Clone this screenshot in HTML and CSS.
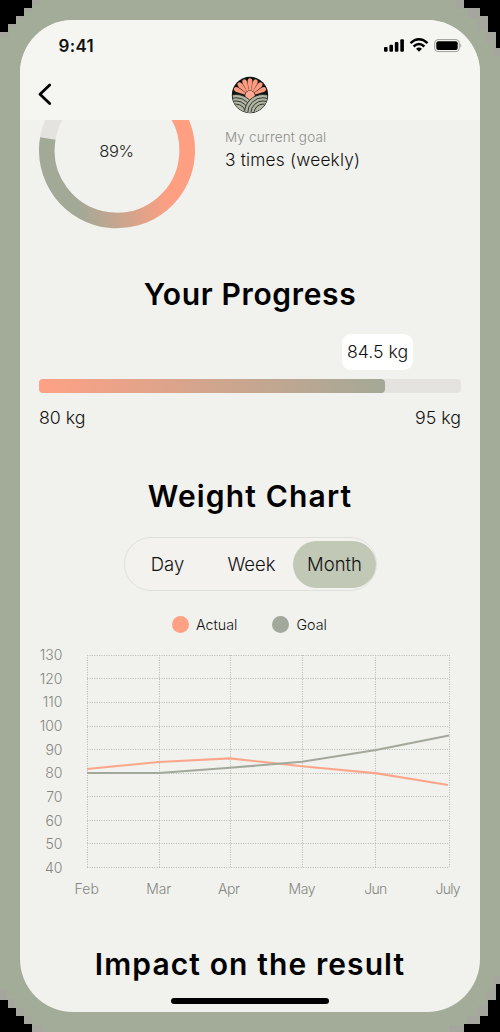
FILE: index.html
```html
<!DOCTYPE html>
<html lang="en">
<head>
<meta charset="utf-8">
<title>Your Progress</title>
<link rel="stylesheet" href="styles.css">
</head>
<body>
<div class="stage">
<svg class="corners" width="500" height="1032" viewBox="0 0 500 1032" shape-rendering="crispEdges">
<g fill="#a5a5a3"><path d="M0 0H40V5H31V12H24V19H16V27H9V37H0zM456 0H500V56H493V43H486V30H478V18H468V9H456zM0 990H7V999H15V1008H24V1016H32V1025H42V1032H0zM500 976H493V991H486V1005H478V1016H467V1025H449V1032H500z" opacity=".7"/></g>
<path d="M0 0H32V8H24V16H16V24H8V32H0zM464 0H500V48H496V32H488V16H480V8H464zM0 1000H8V1008H16V1016H24V1024H32V1032H0zM500 984H496V1000H488V1016H480V1024H464V1032H500z"/>
</svg>
<main class="screen">
  <header class="header">
    <div class="status">
      <span class="time">9:41</span>
      <svg width="80" height="16" viewBox="0 0 80 16">
        <rect x="1" y="9" width="3.6" height="4.8" rx="1"/><rect x="6.4" y="6.7" width="3.6" height="7.1" rx="1"/><rect x="11.8" y="4" width="3.6" height="9.8" rx="1"/><rect x="17.3" y="1.2" width="3.6" height="12.6" rx="1"/>
        <g fill="none" stroke="#000" stroke-width="2.4"><path d="M27.5 5.1Q36 -2.6 44.5 5.1"/><path d="M30.6 8.5Q36 3.6 41.4 8.5"/></g><path d="M33 10.8Q36 8.3 39 10.8L36 13.8z"/>
        <rect x="51.7" y="1.6" width="24.6" height="12" rx="3.3" fill="none" stroke="#9c9d99"/><rect x="53.3" y="3.2" width="21.4" height="8.8" rx="2"/><path d="M77.4 5.5q2 2 0 4z" fill="#9c9d99"/>
      </svg>
    </div>
    <div class="nav">
      <svg class="back" width="16" height="24" viewBox="0 0 16 24"><path d="M12.7 3L3 12.2L12.7 21.5" fill="none" stroke="#000" stroke-width="2.8" stroke-linecap="round" stroke-linejoin="round"/></svg>
      <svg class="logo" width="38" height="38" viewBox="0 0 38 38">
        <defs><clipPath id="disc"><circle cx="19" cy="19" r="17.4"/></clipPath></defs>
        <circle cx="19" cy="19" r="18.2" fill="#11130f"/>
        <g clip-path="url(#disc)">
          <g fill="#fb9b80">
            <path d="M18 14.5L16.6 6Q16.6 2.3 19 2.3T21.4 6L20 14.5z"/>
            <path d="M18 14.5L16.6 6Q16.6 2.3 19 2.3T21.4 6L20 14.5z" transform="rotate(21 19 20)"/>
            <path d="M18 14.5L16.6 6Q16.6 2.3 19 2.3T21.4 6L20 14.5z" transform="rotate(-21 19 20)"/>
            <path d="M18 14.5L16.6 6Q16.6 2.3 19 2.3T21.4 6L20 14.5z" transform="rotate(42 19 20)"/>
            <path d="M18 14.5L16.6 6Q16.6 2.3 19 2.3T21.4 6L20 14.5z" transform="rotate(-42 19 20)"/>
            <path d="M18 14.5L16.6 6Q16.6 2.3 19 2.3T21.4 6L20 14.5z" transform="rotate(64 19 20)"/>
            <path d="M18 14.5L16.6 6Q16.6 2.3 19 2.3T21.4 6L20 14.5z" transform="rotate(-64 19 20)"/>
            <circle cx="19" cy="19.6" r="4.8" fill="#ffa896"/>
          </g>
          <g fill="#b0b5a4" stroke="#262a22" stroke-width=".9"><circle cx="5" cy="38" r="19.5"/><circle cx="5" cy="38" r="16.3"/><circle cx="5" cy="38" r="13.1"/><circle cx="5" cy="38" r="9.9"/>
          <circle cx="32" cy="37" r="18.5"/><circle cx="32" cy="37" r="15.3"/><circle cx="32" cy="37" r="12.1"/><circle cx="32" cy="37" r="8.9"/></g>
        </g>
      </svg>
    </div>
  </header>
  <section class="goal">
    <svg class="ring" width="156" height="109" viewBox="0 47 156 109">
      <defs><linearGradient id="arc" gradientUnits="userSpaceOnUse" x1="30" y1="88" x2="120" y2="70"><stop offset="0" stop-color="#a3a997"/><stop offset="1" stop-color="#ff9f82"/></linearGradient></defs>
      <circle cx="78" cy="77.3" r="70.2" fill="none" stroke="#e5e3df" stroke-width="15.6"/>
      <path d="M78 7.1A70.2 70.2 0 1 1 8.8 65.5" fill="none" stroke="url(#arc)" stroke-width="15.6"/>
      <text class="percent" x="77.5" y="84" text-anchor="middle">89%</text>
    </svg>
    <div class="goal-text"><span class="hint">My current goal</span><span class="target">3 times (weekly)</span></div>
  </section>
  <h2 class="title t-progress">Your Progress</h2>
  <section class="progress">
    <div class="bubble">84.5 kg</div>
    <div class="track"><div class="fill"></div></div>
    <div class="ends"><span>80 kg</span><span>95 kg</span></div>
  </section>
  <h2 class="title t-chart">Weight Chart</h2>
  <nav class="tabs"><span class="tab">Day</span><span class="tab">Week</span><span class="tab active">Month</span></nav>
  <div class="legend"><span class="key"><i class="dot actual"></i>Actual</span><span class="key"><i class="dot planned"></i>Goal</span></div>
  <svg class="chart" width="460" height="262" viewBox="20 642 460 262">
    <g fill="none" stroke="#bfc0bc" stroke-width="1" stroke-dasharray="1.2 1.2">
      <path d="M87 655.5H449M87 678.5H449M87 702.5H449M87 726.5H449M87 749.5H449M87 773.5H449M87 796.5H449M87 820.5H449M87 843.5H449M87 867.5H449"/>
      <path d="M87.5 655V867M159.5 655V867M230.5 655V867M302.5 655V867M375.5 655V867M449.5 655V867"/>
    </g>
    <g fill="none" stroke-width="2.1" stroke-linejoin="round"><path d="M87 769L159 762L230 758.4L302 766.2L377 773.4L448 785" stroke="#fba68b"/><path d="M87 773H159L230 767.8L302 761.8L376 750L449 735.5" stroke="#a2a89b"/></g>
    <g class="axis" text-anchor="end"><text x="62.5" y="660">130</text><text x="62.5" y="684">120</text><text x="62.5" y="707">110</text><text x="62.5" y="731">100</text><text x="62.5" y="754.5">90</text><text x="62.5" y="778">80</text><text x="62.5" y="801.5">70</text><text x="62.5" y="825.5">60</text><text x="62.5" y="848.5">50</text><text x="62.5" y="872.5">40</text></g>
    <g class="axis" text-anchor="middle"><text x="86.7" y="893.7" textLength="24.5">Feb</text><text x="158.7" y="893.7" textLength="25">Mar</text><text x="229" y="893.7" textLength="22">Apr</text><text x="302" y="893.7" textLength="27">May</text><text x="375.7" y="893.7" textLength="23">Jun</text><text x="448" y="893.7" textLength="25">July</text></g>
  </svg>
  <h2 class="title t-impact">Impact on the result</h2>
  <div class="home"></div>
</main>
</div>
</body>
</html>
```
FILE: styles.css
```css
* { box-sizing: border-box; }
body { margin: 0; font-family: Inter, "Open Sans", sans-serif; color: #111; }
.stage { position: relative; width: 500px; height: 1032px; padding: 20px; background: #a3ac98; overflow: hidden; }
.corners { position: absolute; left: 0; top: 0; }
.screen { position: relative; display: flex; flex-direction: column; height: 992px; border-radius: 53px; overflow: hidden; background: #f1f2ed; }
.header { height: 100px; flex: none; background: #f5f6f2; }
.status { height: 51px; padding: 16px 17px 0 38.5px; display: flex; justify-content: space-between; align-items: flex-start; }
.status svg { margin-top: 2px; }
.time { font-size: 17px; line-height: 19px; font-weight: 600; letter-spacing: .3px; margin-top: 1px; }
.nav { height: 49px; display: flex; align-items: center; padding-left: 17px; }
.back { margin: -3px 177.5px 0 0; }
.logo { margin-top: -1px; }
.goal { height: 109px; flex: none; display: flex; padding-left: 19px; }
.ring { flex: none; }
.percent { font-size: 16.5px; font-weight: 350; letter-spacing: -.4px; fill: #222; }
.goal-text { display: flex; flex-direction: column; padding: 9px 0 0 30px; white-space: nowrap; }
.hint { color: #8d8e8b; font-size: 13.5px; line-height: 17px; font-weight: 300; letter-spacing: .15px; }
.target { font-size: 17.3px; line-height: 27px; font-weight: 320; letter-spacing: .2px; }
.title { margin: 0; height: 36px; line-height: 36px; font-size: 30px; font-weight: 600; text-align: center; white-space: nowrap; color: #000; flex: none; }
.t-progress { margin-top: 47px; letter-spacing: .65px; }
.progress { margin: 22px 19px 0; height: 98px; flex: none; }
.bubble { width: 71px; height: 36px; margin-left: 303px; border-radius: 9px; background: #fff; text-align: center; line-height: 36px; font-size: 17.7px; font-weight: 300; white-space: nowrap; }
.track { height: 14px; margin-top: 9px; border-radius: 4px; background: #e5e3df; }
.fill { width: 346px; height: 14px; border-radius: 4px; background: linear-gradient(90deg, #ffa184, #a3a997); }
.ends { display: flex; justify-content: space-between; margin-top: 12px; line-height: 26px; font-size: 17.8px; font-weight: 300; }
.t-chart { margin-top: 46px; letter-spacing: 1.15px; }
.tabs { display: flex; width: 253px; height: 54px; margin: 23px 0 0 104px; padding: 2.5px 0; border: 1px solid #dfe0dc; border-radius: 27px; background: #f3f2ef; flex: none; }
.tab { width: 85px; display: flex; align-items: center; justify-content: center; font-size: 18.5px; font-weight: 320; }
.tab:nth-child(2) { width: 83px; }
.tab.active { width: 83px; border-radius: 24px; background: #c1c8b5; }
.legend { height: 51px; display: flex; padding: 24px 0 0 152px; gap: 35px; flex: none; }
.key { display: flex; gap: 7px; align-items: center; height: 18px; font-size: 14.3px; font-weight: 350; }
.dot { width: 17px; height: 17px; border-radius: 50%; }
.actual { background: #ffa184; }
.planned { background: #a2a89b; }
.chart { flex: none; display: block; }
.axis { font-size: 14px; font-weight: 300; fill: #858683; }
.t-impact { margin-top: 42px; letter-spacing: 1.1px; }
.home { width: 158px; height: 6px; margin: 16px 0 0 151px; border-radius: 3px; background: #000; flex: none; }
```
